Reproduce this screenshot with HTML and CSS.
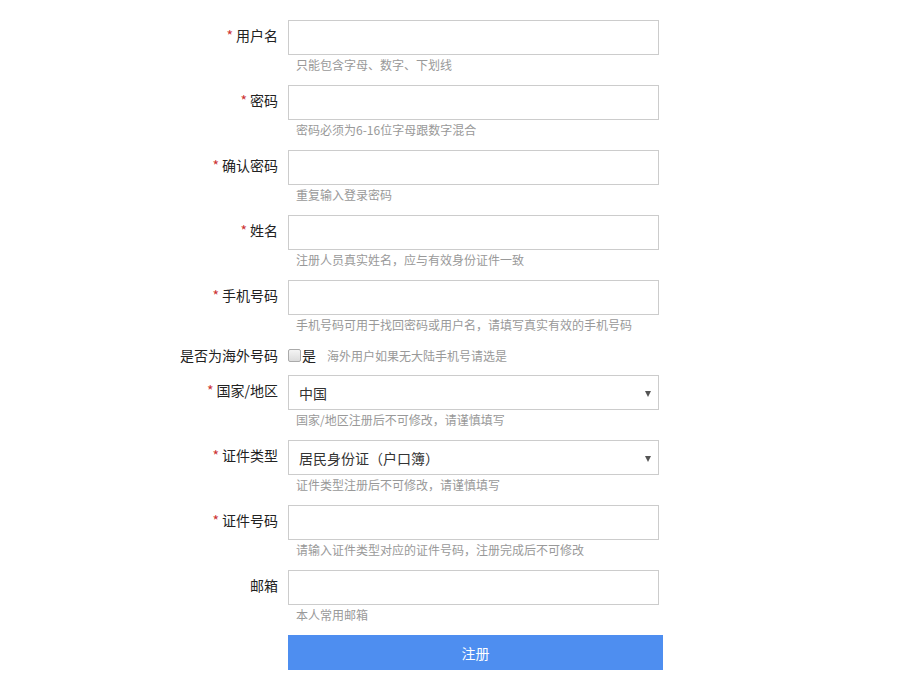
FILE: index.html
```html
<!DOCTYPE html>
<html lang="zh-CN">
<head>
<meta charset="utf-8">
<title>注册</title>
<link rel="stylesheet" href="styles.css">
</head>
<body>
<form class="reg-form">
  <div class="row">
    <label class="label"><span class="req">*</span>用户名</label>
    <div class="field">
      <input class="input" type="text">
      <div class="hint">只能包含字母、数字、下划线</div>
    </div>
  </div>
  <div class="row">
    <label class="label"><span class="req">*</span>密码</label>
    <div class="field">
      <input class="input" type="password">
      <div class="hint">密码必须为6-16位字母跟数字混合</div>
    </div>
  </div>
  <div class="row">
    <label class="label"><span class="req">*</span>确认密码</label>
    <div class="field">
      <input class="input" type="password">
      <div class="hint">重复输入登录密码</div>
    </div>
  </div>
  <div class="row">
    <label class="label"><span class="req">*</span>姓名</label>
    <div class="field">
      <input class="input" type="text">
      <div class="hint">注册人员真实姓名，应与有效身份证件一致</div>
    </div>
  </div>
  <div class="row">
    <label class="label"><span class="req">*</span>手机号码</label>
    <div class="field">
      <input class="input" type="text">
      <div class="hint">手机号码可用于找回密码或用户名，请填写真实有效的手机号码</div>
    </div>
  </div>
  <div class="row row-check">
    <label class="label label-check">是否为海外号码</label>
    <div class="field check-field">
      <label class="check"><span class="box"></span>是</label>
      <span class="check-hint">海外用户如果无大陆手机号请选是</span>
    </div>
  </div>
  <div class="row">
    <label class="label"><span class="req">*</span>国家/地区</label>
    <div class="field">
      <div class="select">中国</div>
      <div class="hint">国家/地区注册后不可修改，请谨慎填写</div>
    </div>
  </div>
  <div class="row">
    <label class="label"><span class="req">*</span>证件类型</label>
    <div class="field">
      <div class="select">居民身份证（户口簿）</div>
      <div class="hint">证件类型注册后不可修改，请谨慎填写</div>
    </div>
  </div>
  <div class="row">
    <label class="label"><span class="req">*</span>证件号码</label>
    <div class="field">
      <input class="input" type="text">
      <div class="hint">请输入证件类型对应的证件号码，注册完成后不可修改</div>
    </div>
  </div>
  <div class="row">
    <label class="label">邮箱</label>
    <div class="field">
      <input class="input" type="text">
      <div class="hint">本人常用邮箱</div>
    </div>
  </div>
  <div class="row">
    <div class="label"></div>
    <div class="field">
      <button class="submit" type="button">注册</button>
    </div>
  </div>
</form>
</body>
</html>
```

FILE: styles.css
```css
html, body {
  margin: 0;
  padding: 0;
  background: #fff;
}
body {
  font-family: "Noto Sans CJK SC", "Microsoft YaHei", sans-serif;
  color: #333;
  font-size: 14px;
}
.reg-form {
  display: flex;
  flex-direction: column;
  padding: 20px 0 0 178px;
}
.row {
  display: flex;
  margin-bottom: 10px;
}
.label {
  width: 100px;
  padding-right: 10px;
  text-align: right;
  font-size: 14px;
  line-height: 20px;
  padding-top: 5px;
  color: #222;
  white-space: nowrap;
}
.req {
  color: #cc3333;
  margin-right: 3px;
  font-size: 14px;
}
.field {
  display: flex;
  flex-direction: column;
}
.input, .select {
  box-sizing: border-box;
  width: 371px;
  height: 35px;
  border: 1px solid #cccccc;
  margin: 0;
  padding: 0 10px;
  font-family: inherit;
  font-size: 14px;
  background: #fff;
  outline: none;
}
.select {
  position: relative;
  line-height: 35px;
  color: #333;
}
.select::after {
  content: "";
  position: absolute;
  right: 7px;
  top: 15px;
  border-left: 3px solid transparent;
  border-right: 3px solid transparent;
  border-top: 6px solid #555;
}
.hint {
  font-size: 12px;
  line-height: 20px;
  color: #999;
  padding-left: 8px;
}
.row-check .label-check {
  padding-top: 0;
}
.check-field {
  flex-direction: row;
  align-items: center;
  height: 20px;
}
.check {
  display: flex;
  align-items: center;
  font-size: 14px;
  color: #222;
}
.box {
  box-sizing: border-box;
  width: 13px;
  height: 13px;
  border: 1px solid #aaa;
  border-radius: 2px;
  background: linear-gradient(#f4f4f4, #dcdcdc);
  margin-right: 1px;
}
.check-hint {
  margin-left: 11px;
  font-size: 12px;
  color: #999;
}
.submit {
  width: 375px;
  height: 35px;
  border: none;
  background: #4e8ef0;
  color: #fff;
  font-family: inherit;
  font-size: 14px;
  padding: 0;
  margin: 0;
}
```
